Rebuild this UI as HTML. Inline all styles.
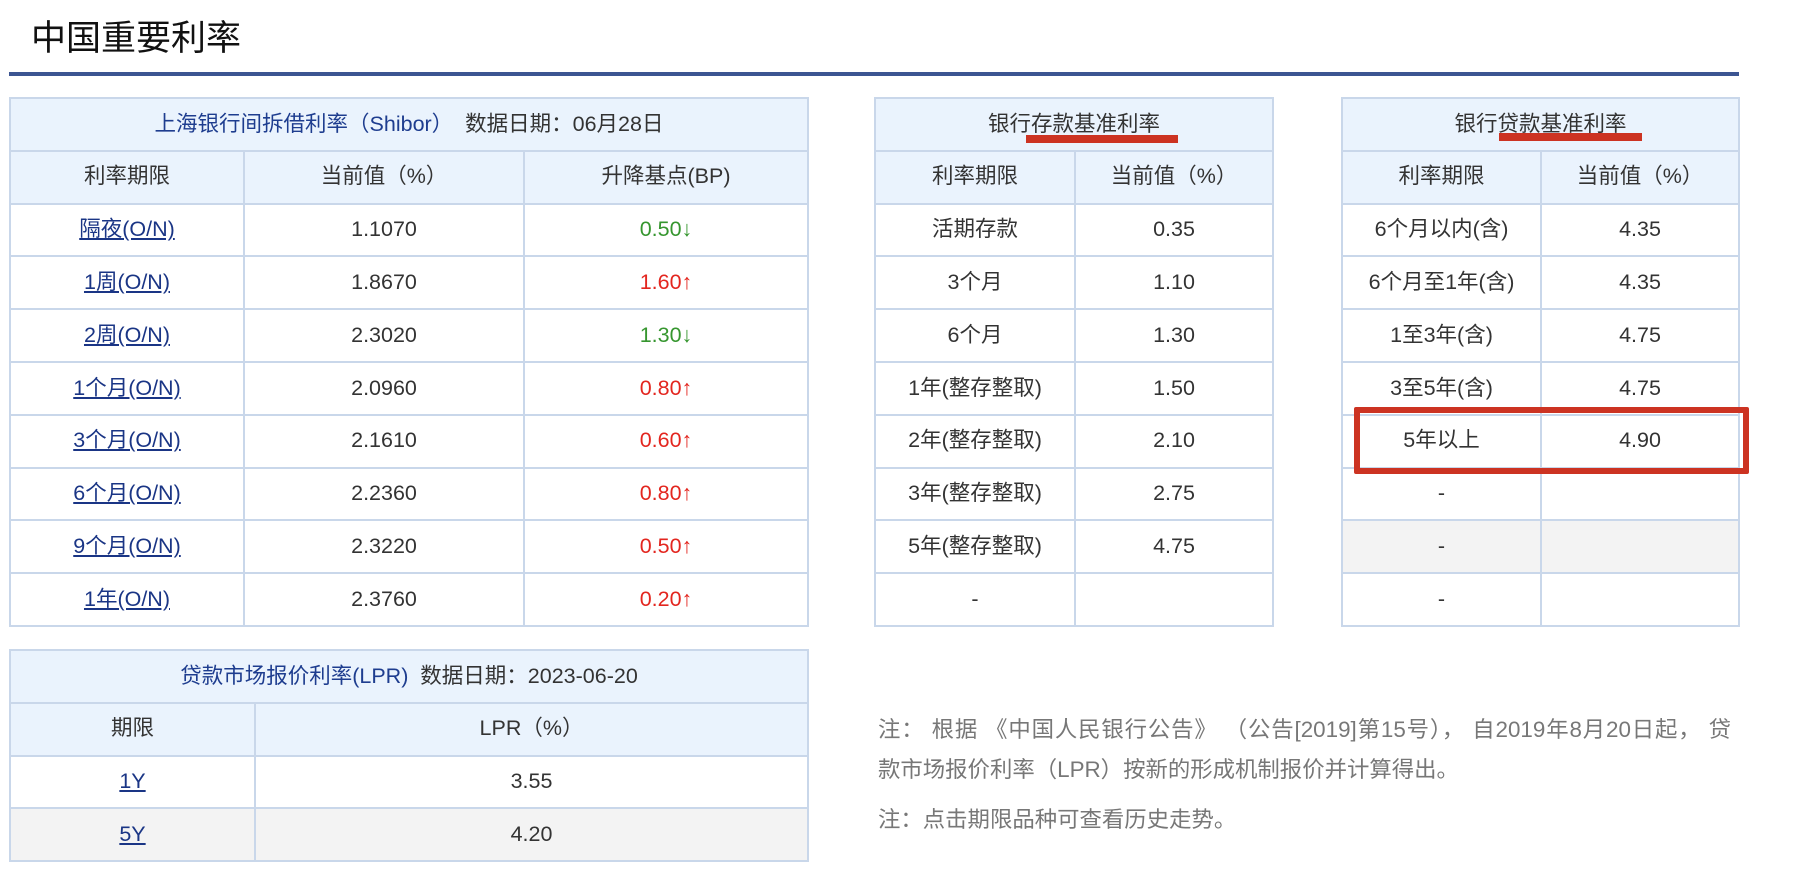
<!DOCTYPE html>
<html><head><meta charset="utf-8"><style>
body{margin:0;width:1810px;height:884px;background:#fff;font-family:"Liberation Sans","Noto Sans CJK SC",sans-serif;position:relative;overflow:hidden;color:#333}
h1{position:absolute;left:31px;top:10px;margin:0;font-size:35px;font-weight:normal;color:#111}
.line{position:absolute;left:9px;top:72px;width:1730px;height:4px;background:#3c5592}
table{position:absolute;border-collapse:collapse;table-layout:fixed;font-size:21.5px}
tr{height:52.8px}
td{border:2px solid #c9d7ea;text-align:center;padding:0;line-height:1;vertical-align:middle}
tr.h td{background:#eaf3fd}
.t{color:#1e3d8f}
a{color:#1a3585;text-decoration:underline}
.g{color:#36962f}.r{color:#e3261f}
tr.gr td{background:#f3f3f3}
.u{position:absolute;background:#cc3322}
.note{position:absolute;left:878px;color:#777;font-size:22.4px;white-space:nowrap}
.j{width:853px;text-align:justify;text-align-last:justify;white-space:normal}
</style></head><body>
<h1>中国重要利率</h1>
<div class="line"></div>

<table style="left:9px;top:97px;width:800px">
<col style="width:234px"><col style="width:280px"><col>
<tr class="h"><td colspan="3"><span class="t">上海银行间拆借利率（Shibor）</span>&nbsp; 数据日期：06月28日</td></tr>
<tr class="h"><td>利率期限</td><td>当前值（%）</td><td>升降基点(BP)</td></tr>
<tr><td><a>隔夜(O/N)</a></td><td>1.1070</td><td class="g">0.50↓</td></tr>
<tr><td><a>1周(O/N)</a></td><td>1.8670</td><td class="r">1.60↑</td></tr>
<tr><td><a>2周(O/N)</a></td><td>2.3020</td><td class="g">1.30↓</td></tr>
<tr><td><a>1个月(O/N)</a></td><td>2.0960</td><td class="r">0.80↑</td></tr>
<tr><td><a>3个月(O/N)</a></td><td>2.1610</td><td class="r">0.60↑</td></tr>
<tr><td><a>6个月(O/N)</a></td><td>2.2360</td><td class="r">0.80↑</td></tr>
<tr><td><a>9个月(O/N)</a></td><td>2.3220</td><td class="r">0.50↑</td></tr>
<tr><td><a>1年(O/N)</a></td><td>2.3760</td><td class="r">0.20↑</td></tr>
</table>

<table style="left:874px;top:97px;width:400px">
<col style="width:200px"><col>
<tr class="h"><td colspan="2">银行存款基准利率</td></tr>
<tr class="h"><td>利率期限</td><td>当前值（%）</td></tr>
<tr><td>活期存款</td><td>0.35</td></tr>
<tr><td>3个月</td><td>1.10</td></tr>
<tr><td>6个月</td><td>1.30</td></tr>
<tr><td>1年(整存整取)</td><td>1.50</td></tr>
<tr><td>2年(整存整取)</td><td>2.10</td></tr>
<tr><td>3年(整存整取)</td><td>2.75</td></tr>
<tr><td>5年(整存整取)</td><td>4.75</td></tr>
<tr><td>-</td><td></td></tr>
</table>

<table style="left:1341px;top:97px;width:399px">
<col style="width:199px"><col>
<tr class="h"><td colspan="2">银行贷款基准利率</td></tr>
<tr class="h"><td>利率期限</td><td>当前值（%）</td></tr>
<tr><td>6个月以内(含)</td><td>4.35</td></tr>
<tr><td>6个月至1年(含)</td><td>4.35</td></tr>
<tr><td>1至3年(含)</td><td>4.75</td></tr>
<tr><td>3至5年(含)</td><td>4.75</td></tr>
<tr><td>5年以上</td><td>4.90</td></tr>
<tr><td>-</td><td></td></tr>
<tr class="gr"><td>-</td><td></td></tr>
<tr><td>-</td><td></td></tr>
</table>

<table style="left:9px;top:649px;width:800px">
<col style="width:245px"><col>
<tr class="h"><td colspan="2"><span class="t">贷款市场报价利率(LPR)</span>&nbsp; 数据日期：2023-06-20</td></tr>
<tr class="h"><td>期限</td><td>LPR（%）</td></tr>
<tr><td><a>1Y</a></td><td>3.55</td></tr>
<tr class="gr"><td><a>5Y</a></td><td>4.20</td></tr>
</table>

<div class="u" style="left:1026px;top:135px;width:152px;height:8px"></div>
<div class="u" style="left:1499px;top:133px;width:143px;height:8px"></div>
<div style="position:absolute;left:1354px;top:407px;width:383px;height:55px;border:6px solid #cc3322;border-radius:2px"></div>

<div class="note j" style="top:712px">注： 根据 《中国人民银行公告》 （公告[2019]第15号）， 自2019年8月20日起， 贷</div>
<div class="note" style="top:752px">款市场报价利率（LPR）按新的形成机制报价并计算得出。</div>
<div class="note" style="top:802px">注：点击期限品种可查看历史走势。</div>
</body></html>
